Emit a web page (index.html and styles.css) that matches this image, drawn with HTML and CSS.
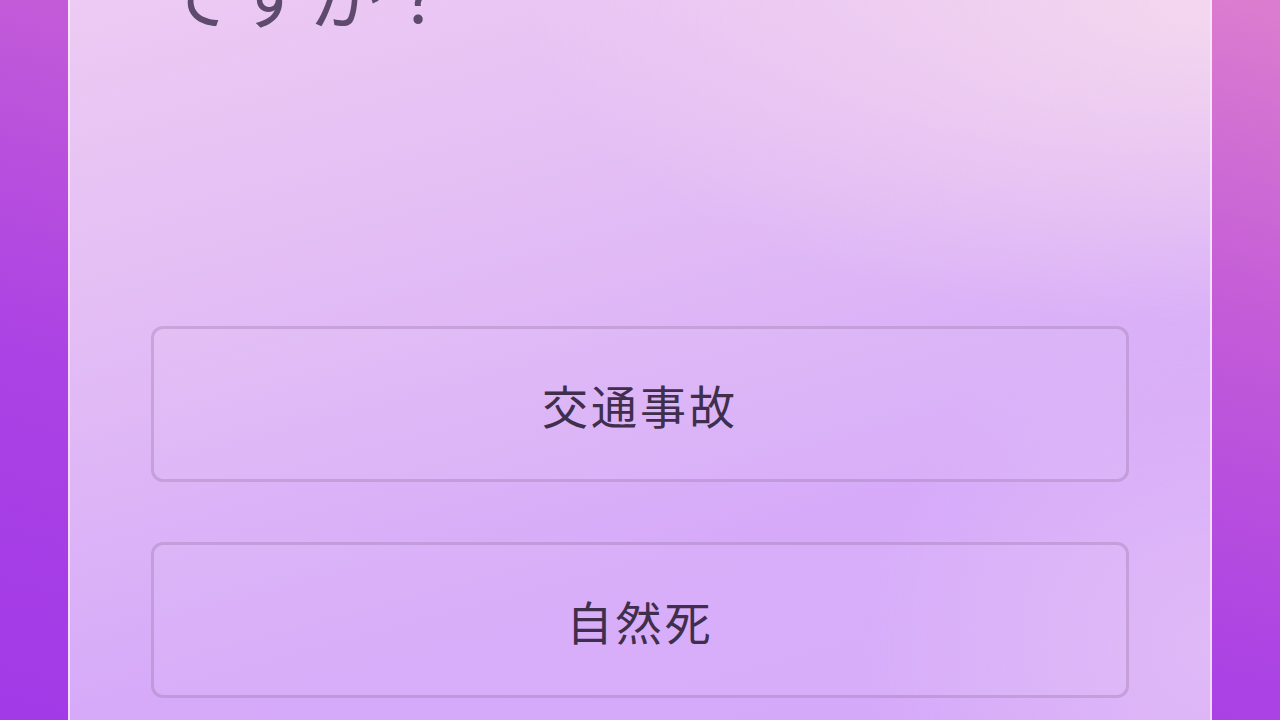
FILE: index.html
```html
<!DOCTYPE html>
<html lang="ja">
<head>
    <meta charset="UTF-8">
    <meta name="viewport" content="width=device-width, initial-scale=1.0">
    <title>クイズ</title>
    <link rel="stylesheet" href="styles.css">
</head>
<body>
    <div class="card">
        <div class="question">ですか？</div>
        <div class="answers">
            <button class="answer">交通事故</button>
            <button class="answer">自然死</button>
        </div>
    </div>
</body>
</html>
```

FILE: styles.css
```css
body {
    margin: 0;
    padding: 0;
    height: 100vh;
    overflow: hidden;
    font-family: "Noto Sans CJK JP", "Noto Sans", sans-serif;
    background: linear-gradient(195deg, #dc7ecf 0%, #c45cd8 30%, #ab42e4 65%, #a23ae8 100%);
    display: flex;
    justify-content: center;
}

.card {
    width: 1144px;
    height: 100%;
    box-sizing: border-box;
    border-left: 2px solid rgba(255, 235, 255, 0.7);
    border-right: 2px solid rgba(255, 235, 255, 0.7);
    background:
        radial-gradient(ellipse 60% 45% at 100% 0%, rgba(246, 218, 238, 0.9), rgba(246, 218, 238, 0) 100%),
        radial-gradient(ellipse 30% 50% at 100% 90%, rgba(228, 192, 246, 0.7), rgba(228, 192, 246, 0) 100%),
        linear-gradient(165deg, #edcbf3 0%, #e2bcf5 35%, #d6aaf9 70%, #d5a9f9 100%);
    padding: 0 81px;
    display: flex;
    flex-direction: column;
}

.question {
    margin-top: -58px;
    padding-left: 10px;
    font-size: 72px;
    line-height: 100px;
    letter-spacing: 2px;
    color: #5e4a6c;
    white-space: nowrap;
}

.answers {
    margin-top: 284px;
    display: flex;
    flex-direction: column;
    gap: 60px;
}

.answer {
    height: 156px;
    border: 3px solid rgba(150, 115, 165, 0.35);
    border-radius: 12px;
    background: rgba(255, 255, 255, 0.05);
    font-family: "Noto Sans CJK JP", "Noto Sans", sans-serif;
    font-size: 46px;
    letter-spacing: 3px;
    color: #3f2e4c;
    cursor: pointer;
}
```
